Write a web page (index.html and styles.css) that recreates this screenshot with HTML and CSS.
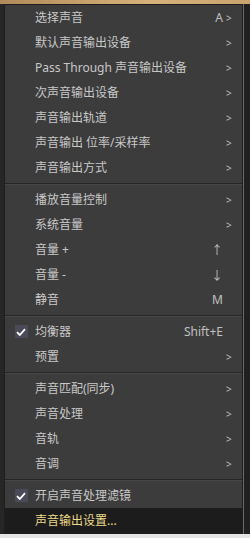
FILE: index.html
```html
<!DOCTYPE html>
<html>
<head>
<meta charset="utf-8">
<link rel="stylesheet" href="styles.css">
</head>
<body>
<div class="topbar"></div>
<div class="stage">
  <div class="leftstrip"></div>
  <div class="menu">
    <div class="item"><span class="chk"></span><span class="label">选择声音</span><span class="key">A</span><span class="arr">&gt;</span></div>
    <div class="item"><span class="chk"></span><span class="label">默认声音输出设备</span><span class="key"></span><span class="arr">&gt;</span></div>
    <div class="item"><span class="chk"></span><span class="label">Pass Through 声音输出设备</span><span class="key"></span><span class="arr">&gt;</span></div>
    <div class="item"><span class="chk"></span><span class="label">次声音输出设备</span><span class="key"></span><span class="arr">&gt;</span></div>
    <div class="item"><span class="chk"></span><span class="label">声音输出轨道</span><span class="key"></span><span class="arr">&gt;</span></div>
    <div class="item"><span class="chk"></span><span class="label">声音输出 位率/采样率</span><span class="key"></span><span class="arr">&gt;</span></div>
    <div class="item"><span class="chk"></span><span class="label">声音输出方式</span><span class="key"></span><span class="arr">&gt;</span></div>
    <div class="sep"></div>
    <div class="item"><span class="chk"></span><span class="label">播放音量控制</span><span class="key"></span><span class="arr">&gt;</span></div>
    <div class="item"><span class="chk"></span><span class="label">系统音量</span><span class="key"></span><span class="arr">&gt;</span></div>
    <div class="item"><span class="chk"></span><span class="label">音量 +</span><span class="key">↑</span><span class="arr"></span></div>
    <div class="item"><span class="chk"></span><span class="label">音量 -</span><span class="key">↓</span><span class="arr"></span></div>
    <div class="item"><span class="chk"></span><span class="label">静音</span><span class="key">M</span><span class="arr"></span></div>
    <div class="sep"></div>
    <div class="item"><span class="chk"><span class="box"><svg width="10" height="8" viewBox="0 0 10 8"><path d="M1 4.2 L3.8 7 L9 1.2" fill="none" stroke="#ffffff" stroke-width="1.8"/></svg></span></span><span class="label">均衡器</span><span class="key">Shift+E</span><span class="arr"></span></div>
    <div class="item"><span class="chk"></span><span class="label">预置</span><span class="key"></span><span class="arr">&gt;</span></div>
    <div class="sep"></div>
    <div class="item"><span class="chk"></span><span class="label">声音匹配(同步)</span><span class="key"></span><span class="arr">&gt;</span></div>
    <div class="item"><span class="chk"></span><span class="label">声音处理</span><span class="key"></span><span class="arr">&gt;</span></div>
    <div class="item"><span class="chk"></span><span class="label">音轨</span><span class="key"></span><span class="arr">&gt;</span></div>
    <div class="item"><span class="chk"></span><span class="label">音调</span><span class="key"></span><span class="arr">&gt;</span></div>
    <div class="sep"></div>
    <div class="item"><span class="chk"><span class="box"><svg width="10" height="8" viewBox="0 0 10 8"><path d="M1 4.2 L3.8 7 L9 1.2" fill="none" stroke="#ffffff" stroke-width="1.8"/></svg></span></span><span class="label">开启声音处理滤镜</span><span class="key"></span><span class="arr"></span></div>
    <div class="item active"><span class="chk"></span><span class="label">声音输出设置...</span><span class="key"></span><span class="arr"></span></div>
  </div>
  <div class="rightstrip"></div>
</div>
<div class="bottombar"></div>
</body>
</html>
```

FILE: styles.css
```css
html, body {
  margin: 0;
  padding: 0;
}
body {
  width: 250px;
  height: 538px;
  overflow: hidden;
  background: #1b1b1b;
  font-family: "Noto Sans", "Noto Sans CJK SC", sans-serif;
  font-size: 12px;
}
.topbar {
  height: 4px;
  background: linear-gradient(90deg, #b08a5a, #d6b27a 60%, #c9a46c);
}
.stage {
  display: flex;
}
.leftstrip {
  width: 4px;
  background: #262626;
}
.rightstrip {
  flex: 1;
  background: #202020;
  border-left: 1px solid #6a6a6a;
}
.menu {
  width: 237px;
  background: #3c3c3c;
  border: 1px solid #1e1e1e;
  display: flex;
  flex-direction: column;
}
.item {
  height: 25px;
  display: grid;
  grid-template-columns: 30px 1fr auto 10px;
  align-items: center;
  padding-right: 9px;
  color: #c8c8c8;
  white-space: nowrap;
}
.item.active {
  background: #1c1c1c;
  color: #ecd98a;
}
.chk {
  display: flex;
  justify-content: center;
  padding-left: 2px;
}
.box {
  width: 13px;
  height: 13px;
  background: #4a4a58;
  display: flex;
  align-items: center;
  justify-content: center;
}
.label {
  line-height: 25px;
}
.key {
  text-align: right;
  color: #c0c0c0;
}
.arr {
  font-size: 10px;
  color: #bcbcbc;
  padding-left: 3px;
}
.sep {
  height: 7px;
  display: flex;
  flex-direction: column;
  justify-content: center;
}
.sep::before {
  content: "";
  height: 1px;
  background: #262626;
}
.sep::after {
  content: "";
  height: 1px;
  background: #474747;
}
.bottombar {
  height: 10px;
  background: #e4e4e4;
}
```
